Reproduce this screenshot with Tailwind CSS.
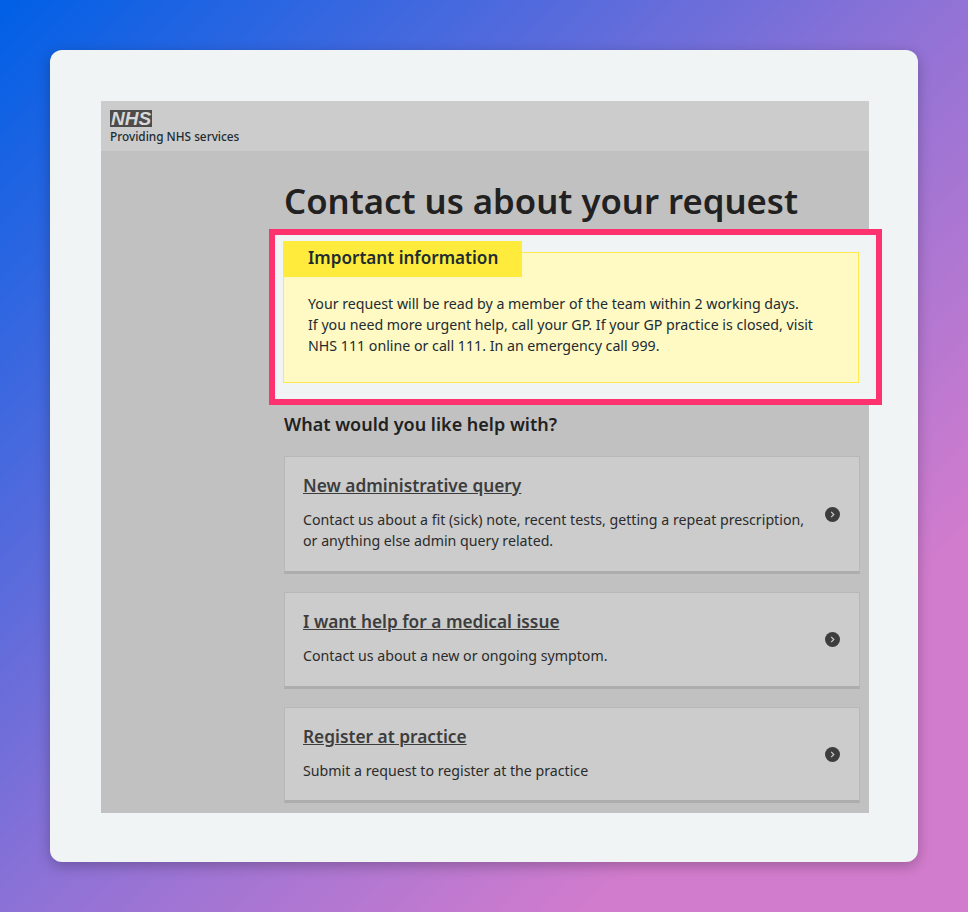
<!DOCTYPE html>
<html lang="en">
<head>
  <meta charset="UTF-8">
  <meta name="viewport" content="width=device-width, initial-scale=1.0">
  <title>Contact us about your request</title>
  <script src="https://cdn.jsdelivr.net/npm/@tailwindcss/browser@4"></script>
</head>
<body class="h-[912px] w-[968px] overflow-hidden bg-[linear-gradient(135deg,#0060e6_0%,#8f72d6_50%,#d27ccd_80%,#d27ccd_100%)] p-[50px] font-['Noto_Sans',sans-serif]">
  <div class="h-[812px] w-[868px] rounded-xl bg-[#f0f4f5] p-[51px] shadow-[0_4px_14px_rgba(0,0,0,0.25)]">
    <div class="h-[712px] w-[768px] bg-[#c1c1c1]">

      <!-- Header -->
      <header class="h-[50px] bg-[#cccccc] pl-[9px] pt-[9px]">
        <div class="flex h-[17px] w-[42px] items-center justify-center bg-[#4c4c4c] font-['Liberation_Sans',sans-serif] text-[19px] leading-none font-bold text-[#d8d8d8] italic">NHS</div>
        <p class="mt-[1px] text-[11.8px] leading-[16px] font-medium text-[#212b32]">Providing NHS services</p>
      </header>

      <main class="pl-[183px] pr-[9px]">
        <h1 class="mt-[26px] text-[34.7px] leading-[48px] font-semibold text-[#212121]">Contact us about your request</h1>

        <!-- Highlighted callout -->
        <div class="-ml-[15px] -mr-[22px] mt-[4px] h-[176px] border-[6px] border-[#ff3270] bg-[#f0f4f5] pl-[8px] pr-[17px] pt-[17px]">
          <div class="relative h-[131px] border border-[#ffe94f] bg-[#fff9c4] pl-[24px]">
            <h2 class="absolute -left-px -top-[12px] flex h-[36px] w-[239px] items-center bg-[#ffeb3b] pb-[3px] pl-[25px] text-[17.1px] font-semibold text-[#212b32]">Important information</h2>
            <p class="pt-[40px] text-[14.2px] leading-[21px] text-[#212b32]">Your request will be read by a member of the team within 2 working days.<br>If you need more urgent help, call your GP. If your GP practice is closed, visit<br>NHS 111 online or call 111. In an emergency call 999.</p>
          </div>
        </div>

        <h2 class="mt-[6px] text-[18px] leading-[26px] font-semibold text-[#212121]">What would you like help with?</h2>

        <!-- Options -->
        <div class="mt-[19px] flex flex-col gap-[18px]">
          <a class="flex h-[118px] items-start border border-b-[3px] border-[#b8b8b8] border-b-[#adadad] bg-[#cccccc] pl-[18px] pr-[19px] pt-[16px]">
            <div class="flex-1">
              <h3 class="text-[17.3px] leading-[26px] font-semibold text-[#3d3d3d] underline">New administrative query</h3>
              <p class="mt-[10px] text-[14.2px] leading-[21px] text-[#2b2b2b]">Contact us about a fit (sick) note, recent tests, getting a repeat prescription,<br>or anything else admin query related.</p>
            </div>
            <svg class="mt-[34px] h-[15px] w-[15px]" viewBox="0 0 15 15"><circle cx="7.5" cy="7.5" r="7.5" fill="#3d3d3d"/><path d="M6.2 4.8 8.8 7.5 6.2 10.2" fill="none" stroke="#cccccc" stroke-width="1.2"/></svg>
          </a>
          <a class="flex h-[97px] items-start border border-b-[3px] border-[#b8b8b8] border-b-[#adadad] bg-[#cccccc] pl-[18px] pr-[19px] pt-[16px]">
            <div class="flex-1">
              <h3 class="text-[17.3px] leading-[26px] font-semibold text-[#3d3d3d] underline">I want help for a medical issue</h3>
              <p class="mt-[10px] text-[14.2px] leading-[21px] text-[#2b2b2b]">Contact us about a new or ongoing symptom.</p>
            </div>
            <svg class="mt-[23px] h-[15px] w-[15px]" viewBox="0 0 15 15"><circle cx="7.5" cy="7.5" r="7.5" fill="#3d3d3d"/><path d="M6.2 4.8 8.8 7.5 6.2 10.2" fill="none" stroke="#cccccc" stroke-width="1.2"/></svg>
          </a>
          <a class="flex h-[96px] items-start border border-b-[3px] border-[#b8b8b8] border-b-[#adadad] bg-[#cccccc] pl-[18px] pr-[19px] pt-[16px]">
            <div class="flex-1">
              <h3 class="text-[17.3px] leading-[26px] font-semibold text-[#3d3d3d] underline">Register at practice</h3>
              <p class="mt-[10px] text-[14.2px] leading-[21px] text-[#2b2b2b]">Submit a request to register at the practice</p>
            </div>
            <svg class="mt-[23px] h-[15px] w-[15px]" viewBox="0 0 15 15"><circle cx="7.5" cy="7.5" r="7.5" fill="#3d3d3d"/><path d="M6.2 4.8 8.8 7.5 6.2 10.2" fill="none" stroke="#cccccc" stroke-width="1.2"/></svg>
          </a>
        </div>
      </main>
    </div>
  </div>
</body>
</html>
